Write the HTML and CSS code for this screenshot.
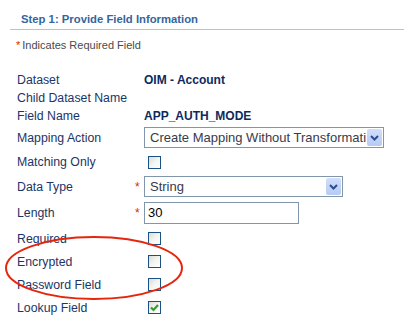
FILE: index.html
```html
<!DOCTYPE html>
<html lang="en">
<head>
    <meta charset="UTF-8">
    <title>Step 1: Provide Field Information</title>
    <link rel="stylesheet" href="styles.css">
</head>
<body>
    <div class="panel">
        <h2 class="step-title">Step 1: Provide Field Information</h2>

        <p class="required-note"><span class="req">*</span>Indicates Required Field</p>

        <div class="form">
            <div class="row row-text">
                <span class="label">Dataset</span><span class="mark"></span>
                <span class="value">OIM - Account</span>
            </div>
            <div class="row row-text row-child">
                <span class="label">Child Dataset Name</span><span class="mark"></span>
                <span class="value"></span>
            </div>
            <div class="row row-text">
                <span class="label">Field Name</span><span class="mark"></span>
                <span class="value">APP_AUTH_MODE</span>
            </div>
            <div class="row row-select">
                <span class="label">Mapping Action</span><span class="mark"></span>
                <div class="select select-wide">
                    <span class="select-text">Create Mapping Without Transformati</span>
                    <span class="select-btn">
                        <svg width="9" height="6" viewBox="0 0 9 6"><path d="M1 1 L4.5 4.5 L8 1" fill="none" stroke="#2b4f8f" stroke-width="2"/></svg>
                    </span>
                </div>
            </div>
            <div class="row row-check">
                <span class="label">Matching Only</span><span class="mark"></span>
                <span class="checkbox"></span>
            </div>
            <div class="row row-select">
                <span class="label">Data Type</span><span class="mark req">*</span>
                <div class="select select-mid">
                    <span class="select-text">String</span>
                    <span class="select-btn">
                        <svg width="9" height="6" viewBox="0 0 9 6"><path d="M1 1 L4.5 4.5 L8 1" fill="none" stroke="#2b4f8f" stroke-width="2"/></svg>
                    </span>
                </div>
            </div>
            <div class="row row-input">
                <span class="label">Length</span><span class="mark req">*</span>
                <div class="textbox">30</div>
            </div>
            <div class="row row-check">
                <span class="label">Required</span><span class="mark"></span>
                <span class="checkbox"></span>
            </div>
            <div class="row row-check">
                <span class="label">Encrypted</span><span class="mark"></span>
                <span class="checkbox"></span>
            </div>
            <div class="row row-check">
                <span class="label">Password Field</span><span class="mark"></span>
                <span class="checkbox"></span>
            </div>
            <div class="row row-check">
                <span class="label">Lookup Field</span><span class="mark"></span>
                <span class="checkbox checked">
                    <svg width="11" height="11" viewBox="0 0 11 11"><path d="M2 5.5 L4.5 8 L9 3" fill="none" stroke="#2ea02e" stroke-width="2.2"/></svg>
                </span>
            </div>
        </div>

        <!-- red highlight drawn over the form -->
        <svg class="highlight" width="184" height="68" viewBox="0 0 184 68">
            <ellipse cx="91" cy="33" rx="88" ry="31" fill="none" stroke="#e5260c" stroke-width="2"/>
        </svg>
    </div>
</body>
</html>
```

FILE: styles.css
```css
body {
    margin: 0;
    background: #ffffff;
    font-family: Tahoma, "DejaVu Sans", "Liberation Sans", sans-serif;
    font-size: 12px;
    color: #1c3566;
}

.panel {
    position: relative;
    padding-top: 12px;
}

.step-title {
    margin: 0 7px 0 10px;
    padding: 0 0 3px 11px;
    font-family: "Liberation Sans", Arial, sans-serif;
    font-size: 11.3px;
    font-weight: bold;
    color: #35659d;
    border-bottom: 1px solid #c9c0ad;
    line-height: 14px;
}

.required-note {
    margin: 8px 0 0 16px;
    font-family: "Liberation Sans", Arial, sans-serif;
    font-size: 11px;
    color: #4a4a4a;
    line-height: 14px;
}

.req {
    color: #e0260c;
    margin-right: 2px;
}

.form {
    margin-top: 20px;
    padding-left: 17px;
    font-family: "Liberation Sans", Arial, sans-serif;
}

.row {
    display: grid;
    grid-template-columns: 118px 9px auto;
    align-items: center;
}

.row-text {
    height: 17px;
    line-height: 17px;
}

.row-child {
    height: 19px;
}

.row-select {
    height: 25px;
}

.row-check {
    height: 23px;
}

.row-select + .row-check {
    height: 24px;
}

.row-input {
    height: 28px;
}

.label {
    color: #1c3566;
    font-size: 12.3px;
}

.mark {
    font-size: 12px;
    line-height: 12px;
}

.value {
    font-weight: bold;
    color: #0d2a5e;
}

.select {
    display: flex;
    align-items: center;
    height: 21px;
    box-sizing: border-box;
    border: 1px solid #7f96ab;
    background: #ffffff;
    padding: 1px;
}

.select-wide {
    width: 240px;
}

.select-mid {
    width: 199px;
}

.select-text {
    flex: 1;
    padding-left: 4px;
    font-size: 13px;
    color: #3a3a4a;
    white-space: nowrap;
    overflow: hidden;
}

.select-btn {
    width: 15px;
    height: 17px;
    display: flex;
    align-items: center;
    justify-content: center;
    background: linear-gradient(#d2defa, #b6caf4);
    border-radius: 2px;
}

.textbox {
    width: 155px;
    height: 22px;
    box-sizing: border-box;
    border: 1px solid #7f96ab;
    padding: 1px 3px;
    font-size: 13px;
    line-height: 18px;
    color: #000000;
}

.checkbox {
    display: flex;
    align-items: center;
    justify-content: center;
    width: 13px;
    height: 13px;
    margin-left: 4px;
    box-sizing: border-box;
    border: 1px solid #1c5185;
    background: linear-gradient(135deg, #dcdcd6 0%, #f4f4f0 50%, #ffffff 100%);
}

.highlight {
    position: absolute;
    left: 3px;
    top: 235px;
}
```
